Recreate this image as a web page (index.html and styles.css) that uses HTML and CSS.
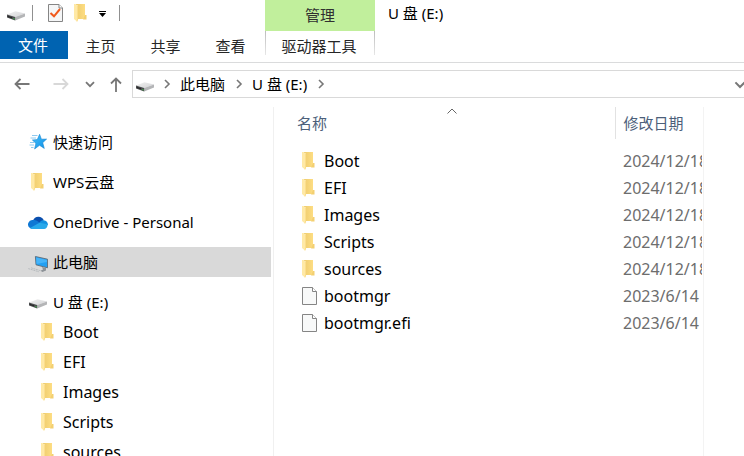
FILE: index.html
```html
<!DOCTYPE html>
<html lang="zh-CN">
<head>
<meta charset="utf-8">
<meta name="viewport" content="width=device-width, initial-scale=1">
<title>U 盘 (E:)</title>
<link rel="stylesheet" href="styles.css">
</head>
<body>
<svg class="defs" aria-hidden="true">
  <defs>
    <linearGradient id="g-folder" x1="0" x2="1"><stop offset="0" stop-color="#ecca6c"/><stop offset="1" stop-color="#ffdf85"/></linearGradient>
    <linearGradient id="g-drive" x1="0" x2="1" y2="1"><stop offset="0" stop-color="#f1f1f1"/><stop offset="1" stop-color="#d2d3d5"/></linearGradient>
    <linearGradient id="g-star" x1="0" y1="0" x2="1" y2="1"><stop offset="0" stop-color="#46c0fb"/><stop offset="1" stop-color="#0c8fe6"/></linearGradient>
    <symbol id="folder" viewBox="0 0 13 18">
      <path d="M1 0H11V11H12V15H4V2Z" fill="url(#g-folder)"/>
      <path d="M11 11H12.5V15.5H9Z" fill="#f3d072"/>
      <path d="M0 0H1L4 2V15L3 17.5L0 15Z" fill="#ffe9a6"/>
      <path d="M3.7 2V15L3 17.5" fill="none" stroke="#f7d87f" stroke-width=".8"/>
    </symbol>
    <symbol id="drive" viewBox="0 0 18 10">
      <path d="M0 3.6L8.5 .2L18 2.6L8.2 6Z" fill="url(#g-drive)"/>
      <path d="M8.2 6L18 2.6V5.6L8.2 9.6Z" fill="#b4b5b7"/>
      <path d="M0 3.6L8.2 6V9.6L0 6.6Z" fill="#4b4d4f"/>
      <path d="M.8 5L5 6.3V7.3L.8 5.9Z" fill="#222"/>
      <path d="M6.3 6.9L7.6 7.3V8.6L6.3 8.2Z" fill="#3fae49"/>
    </symbol>
    <symbol id="file" viewBox="0 0 15 18">
      <path d="M.5 .5H10.5L14.5 4.5V17.5H.5Z" fill="#f8f9f9" stroke="#858585"/>
      <path d="M10.5 .5V4.5H14.5" fill="#fff" stroke="#858585"/>
    </symbol>
    <symbol id="chevron" viewBox="0 0 8 10">
      <path d="M2 1L6 5L2 9" fill="none" stroke="currentColor" stroke-width="1.6"/>
    </symbol>
    <symbol id="down" viewBox="0 0 10 7">
      <path d="M1 1.2L5 5.2L9 1.2" fill="none" stroke="currentColor" stroke-width="1.8"/>
    </symbol>
  </defs>
</svg>

<div class="explorer">
  <header class="top">
    <div class="quick">
      <svg class="i-drive" aria-hidden="true"><use href="#drive"/></svg>
      <span class="sep"></span>
      <button class="tool props" aria-label="属性">
        <svg width="15" height="18" viewBox="0 0 15 18"><path d="M.5 .5H11L14.5 4V17.5H.5Z" fill="#f5f6f7" stroke="#858585"/><path d="M11 .5V4H14.5" fill="#fff" stroke="#858585"/><path d="M2.5 9L6 12.3L12 5" fill="none" stroke="#f0591c" stroke-width="2"/></svg>
      </button>
      <button class="tool newdir" aria-label="新建文件夹"><svg class="i-folder"><use href="#folder"/></svg></button>
      <button class="tool more" aria-label="自定义快速访问工具栏">
        <svg width="7" height="6" viewBox="0 0 7 6"><path d="M0 0H7V1H0ZM0 2H7L3.5 6Z" fill="#000"/></svg>
      </button>
      <span class="sep"></span>
    </div>
    <nav class="tabs">
      <button class="tab file">文件</button>
      <button class="tab">主页</button>
      <button class="tab">共享</button>
      <button class="tab">查看</button>
    </nav>
    <div class="context">管理</div>
    <button class="tab drive-tab">驱动器工具</button>
    <h1 class="title">U 盘 (E:)</h1>
  </header>

  <div class="address-row">
    <button class="nav back" aria-label="后退"><svg width="16" height="12" viewBox="0 0 16 12"><path d="M15.5 6H1.5M6.5 1L1.5 6L6.5 11" fill="none" stroke="currentColor" stroke-width="1.8"/></svg></button>
    <button class="nav forward" aria-label="前进" disabled><svg width="16" height="12" viewBox="0 0 16 12"><path d="M.5 6H14.5M9.5 1L14.5 6L9.5 11" fill="none" stroke="currentColor" stroke-width="1.8"/></svg></button>
    <button class="nav recent" aria-label="最近位置"><svg width="10" height="7"><use href="#down"/></svg></button>
    <button class="nav up" aria-label="上移"><svg width="12" height="15" viewBox="0 0 12 15"><path d="M6 15V1.5M1 6.5L6 1.5L11 6.5" fill="none" stroke="currentColor" stroke-width="1.8"/></svg></button>
    <div class="address">
      <svg class="i-drive" aria-hidden="true"><use href="#drive"/></svg>
      <svg class="i-chevron" aria-hidden="true"><use href="#chevron"/></svg>
      <a href="#pc">此电脑</a>
      <svg class="i-chevron" aria-hidden="true"><use href="#chevron"/></svg>
      <a href="#e">U 盘 (E:)</a>
      <svg class="i-chevron" aria-hidden="true"><use href="#chevron"/></svg>
      <button class="history" aria-label="以前的位置"><svg width="12" height="8" viewBox="0 0 10 7"><use href="#down"/></svg></button>
    </div>
  </div>

  <div class="panes">
    <nav class="tree">
      <a class="node" href="#quick"><span class="ico"><svg width="18" height="16" viewBox="0 0 18 16"><path d="M10.6 .3L12.4 5.2L17.6 5.1L13.7 8.7L15.3 14.4L10.5 11.3L5.6 15L6.9 9.4L3.4 6L8.3 5.6Z" fill="url(#g-star)" stroke="#1787d1" stroke-width=".6"/><path d="M3 1.5H8.5M1.5 4H7M1 8.5H5M.5 11H5M2 13.5H4.5" stroke="#72bdec" stroke-width=".8"/></svg></span>快速访问</a>
      <a class="node" href="#wps"><span class="ico"><svg class="i-folder"><use href="#folder"/></svg></span>WPS云盘</a>
      <a class="node" href="#onedrive"><span class="ico"><svg width="20" height="13" viewBox="0 0 20 13"><path d="M5 4.5A5.8 5.8 0 0 1 15.8 4.3L10 8Z" fill="#0a4fae"/><path d="M2 11.9A4.3 4.3 0 0 1 5.2 4.1C7 3.9 8.4 4.5 10 5.5L13 8L3.5 12.8Z" fill="#0f78d4"/><path d="M11.5 6.5C12.6 4.6 14 4.2 15.6 4.2C18.4 4.8 20 6.3 20 9L14 9Z" fill="#1490df"/><path d="M2 12L11.5 6.7L19.5 8.2A4 4 0 0 1 16.3 13H4.6A4 4 0 0 1 2 12Z" fill="#28a8ea"/></svg></span>OneDrive - Personal</a>
      <a class="node current" href="#pc" aria-current="true"><span class="ico"><svg class="low" width="20" height="17" viewBox="0 0 20 17"><path d="M7.4 .5L19.5 3.2V11.8L8 8.8Z" fill="#22a0f3" stroke="#5b6b78" stroke-width=".9"/><path d="M8.2 1.5L18.8 3.9V6L8.5 8.1Z" fill="#45b4fa"/><path d="M14 11L18 12V14.5L14.5 16L12.5 14.8L15 13.5Z" fill="#8c9297"/><path d="M.3 12.6L11 15.8M3 11.8L13 14.8" stroke="#b3b8bb" stroke-width=".9" stroke-dasharray="2 .6"/></svg></span>此电脑</a>
      <a class="node" href="#e"><span class="ico"><svg class="i-drive low"><use href="#drive"/></svg></span>U 盘 (E:)</a>
      <a class="node child" href="#boot"><span class="ico"><svg class="i-folder"><use href="#folder"/></svg></span>Boot</a>
      <a class="node child" href="#efi"><span class="ico"><svg class="i-folder"><use href="#folder"/></svg></span>EFI</a>
      <a class="node child" href="#images"><span class="ico"><svg class="i-folder"><use href="#folder"/></svg></span>Images</a>
      <a class="node child" href="#scripts"><span class="ico"><svg class="i-folder"><use href="#folder"/></svg></span>Scripts</a>
      <a class="node child" href="#sources"><span class="ico"><svg class="i-folder"><use href="#folder"/></svg></span>sources</a>
    </nav>
    <main class="list">
      <table class="files">
        <thead>
          <tr>
            <th class="name" scope="col" aria-sort="ascending">名称<svg class="sort" width="10" height="6" viewBox="0 0 10 6" aria-hidden="true"><path d="M.5 5.5L5 1L9.5 5.5" fill="none" stroke="#666"/></svg></th>
            <th class="date" scope="col">修改日期</th>
          </tr>
        </thead>
        <tbody>
          <tr><td class="name"><span class="cell"><svg class="i-folder"><use href="#folder"/></svg>Boot</span></td><td class="date">2024/12/18</td></tr>
          <tr><td class="name"><span class="cell"><svg class="i-folder"><use href="#folder"/></svg>EFI</span></td><td class="date">2024/12/18</td></tr>
          <tr><td class="name"><span class="cell"><svg class="i-folder"><use href="#folder"/></svg>Images</span></td><td class="date">2024/12/18</td></tr>
          <tr><td class="name"><span class="cell"><svg class="i-folder"><use href="#folder"/></svg>Scripts</span></td><td class="date">2024/12/18</td></tr>
          <tr><td class="name"><span class="cell"><svg class="i-folder"><use href="#folder"/></svg>sources</span></td><td class="date">2024/12/18</td></tr>
          <tr><td class="name"><span class="cell"><svg class="i-file"><use href="#file"/></svg>bootmgr</span></td><td class="date">2023/6/14</td></tr>
          <tr><td class="name"><span class="cell"><svg class="i-file"><use href="#file"/></svg>bootmgr.efi</span></td><td class="date">2023/6/14</td></tr>
        </tbody>
      </table>
    </main>
  </div>
</div>
</body>
</html>
```
FILE: styles.css
```css
* { box-sizing: border-box; }

body {
  margin: 0;
  background: #fff;
  color: #000;
  font: 15px/20px "Noto Sans", "Noto Sans CJK SC", sans-serif;
}

a { color: inherit; text-decoration: none; }

button {
  padding: 0;
  border: 0;
  background: none;
  color: inherit;
  font: inherit;
}

svg { display: block; flex: none; }

.defs { position: absolute; width: 0; height: 0; }

.explorer {
  display: flex;
  flex-direction: column;
  height: 100vh;
  overflow: hidden;
}

/* Title bar and ribbon tabs */
.top {
  display: grid;
  grid-template-columns: 265px 110px 1fr;
  grid-template-rows: 31px 31px;
  border-bottom: 1px solid #dadbdc;
}

.quick {
  display: flex;
  align-items: center;
  padding: 0 0 5px 7px;
}

.sep { width: 1px; height: 16px; background: #909090; }
.quick .sep { margin-left: 7px; }
.tool { display: flex; align-items: center; }
.props { margin-left: 15px; }
.newdir { margin-left: 11px; }
.more { margin: 2px 6px 0 12px; }

.i-drive { width: 18px; height: 10px; }
.i-folder { width: 13px; height: 18px; }
.i-file { width: 15px; height: 18px; }
.i-chevron { width: 8px; height: 10px; color: #777; }
.quick > .i-drive { margin-top: 6px; }

.tabs { grid-row: 2; display: flex; }

.tab { width: 65px; height: 30px; color: #262626; }
.tab.file { width: 68px; height: 28px; padding-right: 2px; background: #0063b1; color: #fff; }

.context {
  grid-area: 1 / 2;
  background: #c1ef9c;
  color: #303030;
  line-height: 31px;
  text-align: center;
}

.drive-tab {
  grid-area: 2 / 2;
  width: auto;
  height: 24px;
  align-self: start;
  padding: 5px 2px 0 0;
  border: solid;
  border-width: 0 1px;
  border-image: linear-gradient(#bbb, #e8e8e8) 1;
}

.title {
  grid-area: 1 / 3;
  margin: 0;
  padding-left: 13px;
  font-size: 15px;
  font-weight: 400;
  line-height: 26px;
}

/* Navigation and address bar */
.address-row {
  display: flex;
  align-items: center;
  padding: 7px 0 0 14px;
}

.nav { color: #777; }
.forward { margin-left: 23px; color: #d8d8d8; }
.recent { margin-left: 16px; }
.up { margin: 0 10px 0 15px; }

.address {
  display: flex;
  flex: 1;
  align-items: center;
  height: 28px;
  padding-left: 3px;
  border: 1px solid #d9d9d9;
  border-right: 0;
  overflow: hidden;
}

.address > .i-drive { margin: 6px 9px 0 0; }
.address a { margin: 0 10px 0 9px; }
.history { margin: 2px -2px 0 auto; color: #777; }

/* Panes */
.panes { display: flex; flex: 1; min-height: 0; padding-top: 9px; }

.tree {
  display: flex;
  flex: 0 0 274px;
  flex-direction: column;
  gap: 10px;
  padding: 20px 2px 0 0;
  border-right: 1px solid #f0f0f0;
  overflow: hidden;
}

.node {
  display: flex;
  flex: none;
  align-items: center;
  height: 30px;
  padding-left: 28px;
}

.node .ico { display: flex; justify-content: center; width: 20px; margin-right: 5px; }
.node .i-folder { margin-right: 2px; }
.node .low { margin-top: 4px; }
.current { background: #d9d9d9; }
.child { margin-top: -10px; padding-left: 38px; font-size: 16px; }

.list {
  flex: 1;
  min-width: 0;
  margin-right: 40px;
  padding: 0 1px 0 14px;
  border-right: 1px solid #f3f3f3;
}

.files { width: 100%; border-collapse: collapse; table-layout: fixed; }

th {
  height: 32px;
  padding: 0 0 0 9px;
  color: #4c607a;
  font-weight: 400;
  text-align: left;
}

th.name { position: relative; }
th.date { width: 87px; padding-left: 8px; border-left: 1px solid #e2e2e2; }

.sort { position: absolute; top: 1px; left: calc(50% - 4px); }

tbody::before { content: ""; display: block; height: 8px; }

td { height: 27px; padding: 0; font-size: 16px; }
td.name { padding-left: 14px; }
td.date { padding-left: 8px; color: #6d6d6d; overflow: hidden; white-space: nowrap; }

.cell { display: grid; grid-template-columns: 22px 1fr; align-items: center; }
```
